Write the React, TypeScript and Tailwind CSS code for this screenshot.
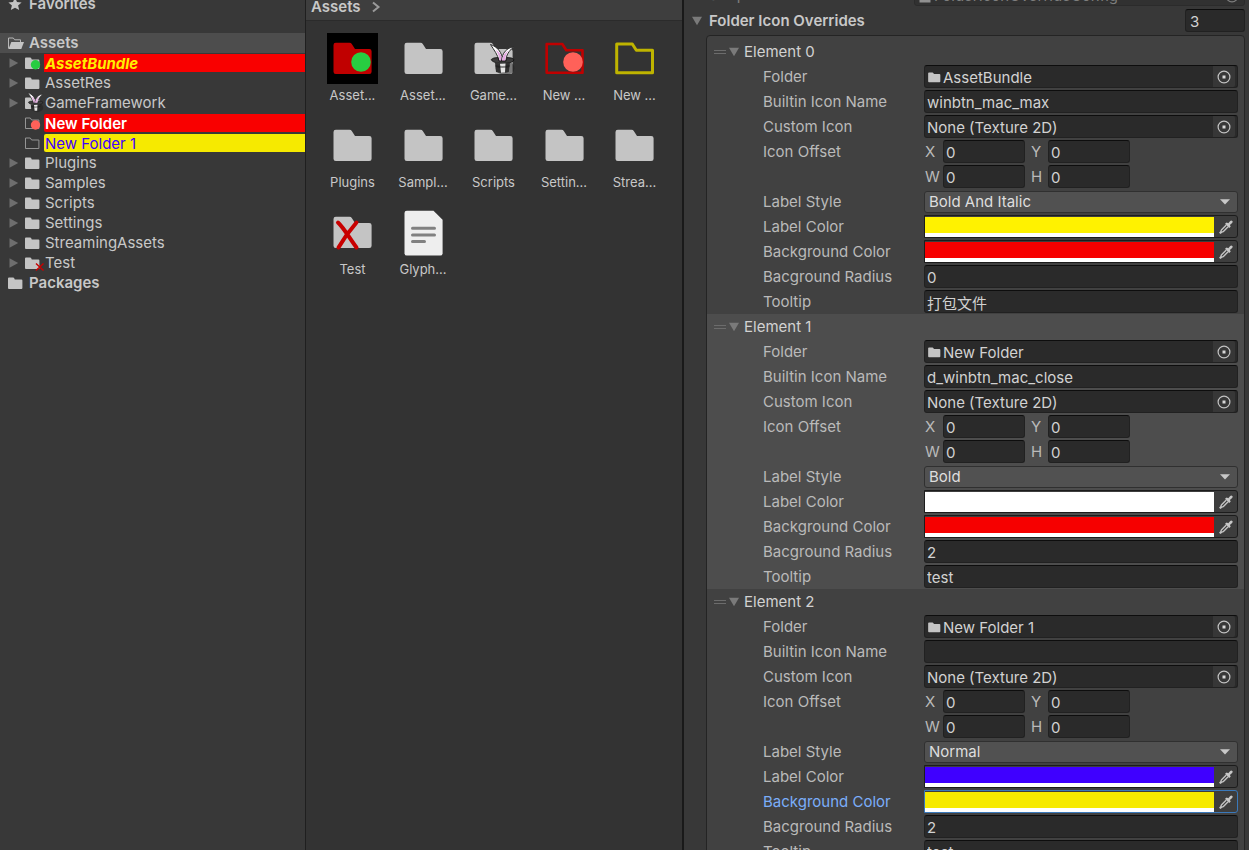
import { useId, type ReactNode } from "react";

type TreeItem = {
  name: string;
  arrow: boolean;
  icon: ReactNode;
  row?: string;
};

type Override = {
  title: string;
  folder: string;
  iconName: string;
  style: string;
  labelColor: string;
  backgroundColor: string;
  radius: string;
  tooltip: string;
  shade: string;
  focused?: boolean;
};

const FOLDER_PATH =
  "M1 3.5Q1 2.5 2 2.5H6.2Q6.8 2.5 7.1 3.1L7.8 4.5H14.4Q15.4 4.5 15.4 5.5V13Q15.4 14 14.4 14H2Q1 14 1 13Z";
const TILE_FOLDER =
  "M6.5 12Q6.5 9.7 8.8 9.7H22.5Q24 9.7 24.8 11L28 16H42.3Q44.6 16 44.6 18.3V38.7Q44.6 41 42.3 41H8.8Q6.5 41 6.5 38.7Z";

function SmallFolder({ outline, children }: { outline?: boolean; children?: ReactNode }) {
  return (
    <svg viewBox="0 0 16 16" className="size-4 shrink-0 overflow-visible" aria-hidden="true">
      {outline ? (
        <path d="M1.5 3H6.3L7.6 5H14.9V13.5H1.5Z" fill="none" stroke="#949494" strokeWidth="1" />
      ) : (
        <path d={FOLDER_PATH} fill="#c4c4c4" />
      )}
      {children}
    </svg>
  );
}

function RabbitHat() {
  return (
    <g>
      <ellipse cx="37" cy="35" rx="9.5" ry="7" fill="#1c1c1c" opacity="0.45" />
      <path d="M22.500 11.500C29 13.500 34 19 35 28L31 28C30 22 26 17 22.500 11.500Z" fill="#fff" stroke="#2b2b2b" strokeWidth="1" />
      <path d="M27.500 17C32 19 34 23 34.500 28L31.500 28C31 23 30 20 27.500 17Z" fill="#e3a9e0" />
      <path d="M45.500 14C39 14.500 34 20 33.500 28L38 28C38 22 41 18 45.500 14Z" fill="#fff" stroke="#2b2b2b" strokeWidth="1" />
      <path d="M40.500 17.500C36.500 20 34.500 23 34 28L37 28C37.500 23 38.500 20 40.500 17.500Z" fill="#e3a9e0" />
      <path d="M23.200 26.500Q25 24.500 30 24.500L31 28H38L39 24.500Q44.500 24.500 46 26.500Q46 30 35 30.500Q24 30 23.200 26.500Z" fill="#3c3c3c" stroke="#111" strokeWidth="0.800" />
      <path d="M27 29.500Q34 31.500 42 29.500L40.800 39Q34.500 41 28 39Z" fill="#303030" />
      <path d="M32 30.700L37.500 30.500L37 39.600L33 39.800Z" fill="#e6e6e6" />
      <path d="M27.300 32Q34.500 34 41.800 32L41.600 34Q34.500 36 27.500 34Z" fill="#111" opacity="0.450" />
    </g>
  );
}

function Tile({ label, className = "", children }: { label: string; className?: string; children: ReactNode }) {
  return (
    <li className="flex h-[87px] flex-col items-center">
      <svg viewBox="0 0 51 51" className={`size-[51px] shrink-0 ${className}`} aria-hidden="true">
        {children}
      </svg>
      <span className="mt-[3px] text-[13px] leading-4 whitespace-nowrap text-[#c8c8c8]">{label}</span>
    </li>
  );
}

const grayFolder = <path d={TILE_FOLDER} fill="#c4c4c4" />;
const outlineFolder = "M7.700 11H23.300L27.300 17.300H43.500V39.800H7.700Z";

function RightArrow() {
  return (
    <svg viewBox="0 0 10 10" className="size-[10px]" aria-hidden="true">
      <path d="M0.500 0.300L9.200 5L0.500 9.700Z" fill="#6e6e6e" />
    </svg>
  );
}

function DownArrow() {
  return (
    <svg viewBox="0 0 10 10" className="size-[10px]" aria-hidden="true">
      <path d="M0 0.700H10L5 9.300Z" fill="#7a7a7a" />
    </svg>
  );
}

const tree: TreeItem[] = [
  {
    name: "AssetBundle",
    arrow: true,
    row: "bg-[#f90000] font-bold italic leading-5 text-[#ffee00]",
    icon: (
      <SmallFolder>
        <circle cx="11.500" cy="9.800" r="4.700" fill="#28cd41" />
      </SmallFolder>
    ),
  },
  { name: "AssetRes", arrow: true, icon: <SmallFolder /> },
  {
    name: "GameFramework",
    arrow: true,
    icon: (
      <SmallFolder>
        <g transform="translate(-10.500 -9.700) scale(0.640)">
          <RabbitHat />
        </g>
      </SmallFolder>
    ),
  },
  {
    name: "New Folder",
    arrow: false,
    row: "rounded-l-[2px] bg-[#f90000] font-semibold leading-5 text-white",
    icon: (
      <SmallFolder outline>
        <circle cx="11.500" cy="10" r="4.700" fill="#ff6159" />
      </SmallFolder>
    ),
  },
  {
    name: "New Folder 1",
    arrow: false,
    row: "rounded-l-[2px] bg-[#f6ea00] leading-5 text-[#4000ff]",
    icon: <SmallFolder outline />,
  },
  { name: "Plugins", arrow: true, icon: <SmallFolder /> },
  { name: "Samples", arrow: true, icon: <SmallFolder /> },
  { name: "Scripts", arrow: true, icon: <SmallFolder /> },
  { name: "Settings", arrow: true, icon: <SmallFolder /> },
  { name: "StreamingAssets", arrow: true, icon: <SmallFolder /> },
  {
    name: "Test",
    arrow: true,
    icon: (
      <SmallFolder>
        <path d="M12 8.500L19.500 15.500M19.500 8.500L12 15.500" stroke="#c80000" strokeWidth="1.500" />
      </SmallFolder>
    ),
  },
];

function Sidebar() {
  return (
    <nav aria-label="Folders" className="overflow-hidden border-r border-[#1f1f1f]">
      <div className="-mt-[6px] flex h-5 items-center gap-[5px] pl-[7px] font-semibold">
        <svg viewBox="0 0 16 16" className="size-4" aria-hidden="true">
          <path
            d="M8 1.500L10 6L14.600 6.400L11.100 9.500L12.200 14.100L8 11.700L3.800 14.100L4.900 9.500L1.400 6.400L6 6Z"
            fill="#c4c4c4"
          />
        </svg>
        <span className="pl-px">Favorites</span>
      </div>
      <div className="mt-[19px] flex h-5 items-center gap-[5px] bg-[#4d4d4d] pl-[7px] font-semibold">
        <svg viewBox="0 0 16 16" className="size-4 overflow-visible" aria-hidden="true">
          <path d="M1.500 13.500V3H6.300L7.600 4.800H13.500V7" fill="none" stroke="#b8b8b8" />
          <path d="M4.300 7H17L14.300 14H1.500Z" fill="#c4c4c4" />
        </svg>
        <span className="pl-px">Assets</span>
      </div>
      <ul>
        {tree.map((item) => (
          <li key={item.name} className="flex h-5 items-center pl-2">
            <span className="w-4 shrink-0 pl-px">{item.arrow && <RightArrow />}</span>
            {item.icon}
            <span className={`ml-1 h-[18px] flex-1 pl-px ${item.row ?? "leading-[18px]"}`}>{item.name}</span>
          </li>
        ))}
      </ul>
      <div className="flex h-5 items-center gap-[5px] pl-[7px] font-semibold">
        <SmallFolder />
        <span className="pl-px">Packages</span>
      </div>
    </nav>
  );
}

function Browser() {
  return (
    <main className="overflow-hidden border-r-2 border-[#191919] bg-[#333333]">
      <header className="-mt-[6px] flex h-[27px] items-center gap-[10px] border-b border-[#2b2b2b] bg-[#3e3e3e] pl-[5px] font-semibold">
        <span>Assets</span>
        <svg viewBox="0 0 10 12" className="h-3 w-[10px]" aria-hidden="true">
          <path d="M2 1.500L7.500 6L2 10.500" fill="none" stroke="#9a9a9a" strokeWidth="2" />
        </svg>
      </header>
      <ul className="grid grid-cols-[repeat(auto-fill,51px)] justify-between gap-x-[19px] pt-3 pr-[22px] pl-[21px]">
        <Tile label="Asset..." className="bg-black">
          <path d={TILE_FOLDER} fill="#c00000" />
          <circle cx="34" cy="29" r="9.800" fill="#28cd41" />
        </Tile>
        <Tile label="Asset...">{grayFolder}</Tile>
        <Tile label="Game...">
          {grayFolder}
          <RabbitHat />
        </Tile>
        <Tile label="New ...">
          <path d={outlineFolder} fill="none" stroke="#c00000" strokeWidth="2.600" strokeLinejoin="round" />
          <circle cx="34" cy="29" r="9.800" fill="#ff6159" />
        </Tile>
        <Tile label="New ...">
          <path d={outlineFolder} fill="none" stroke="#bfb400" strokeWidth="3" strokeLinejoin="round" />
        </Tile>
        <Tile label="Plugins">{grayFolder}</Tile>
        <Tile label="Sampl...">{grayFolder}</Tile>
        <Tile label="Scripts">{grayFolder}</Tile>
        <Tile label="Settin...">{grayFolder}</Tile>
        <Tile label="Strea...">{grayFolder}</Tile>
        <Tile label="Test">
          {grayFolder}
          <path
            d="M11 15.500C17 21 23 32 29.500 40.500M29.500 15.500C23 23 17 31 11.500 40.500"
            fill="none"
            stroke="#c80000"
            strokeWidth="4"
            strokeLinecap="round"
          />
        </Tile>
        <Tile label="Glyph...">
          <path
            d="M6.500 6Q6.500 3.700 8.800 3.700H35.500L44.600 12.800V46.300Q44.600 48.600 42.300 48.600H8.800Q6.500 48.600 6.500 46.300Z"
            fill="#eeeeee"
          />
          <path d="M14.500 21.300H36.500M14.500 28H36.500M14.500 34.400H26.500" stroke="#808080" strokeWidth="3" strokeLinecap="round" />
        </Tile>
      </ul>
    </main>
  );
}

const fieldBox =
  "h-[23px] min-w-0 rounded-[3px] border border-[#212121] border-t-[#0d0d0d] bg-[#2a2a2a] text-[#d2d2d2]";

function TextField({ id, value, label, className = "pl-[2px]" }: { id?: string; value: string; label?: string; className?: string }) {
  return (
    <input id={id} aria-label={label} defaultValue={value} className={`${fieldBox} pt-[2px] outline-none ${className}`} />
  );
}

function ObjectField({ id, children }: { id: string; children: ReactNode }) {
  return (
    <div className={`flex flex-1 items-center ${fieldBox}`}>
      <button id={id} type="button" className="flex h-full min-w-0 flex-1 items-center overflow-hidden pt-[2px] pl-[2px] text-left whitespace-nowrap">
        {children}
      </button>
      <button type="button" aria-label="Pick object" className="mr-[2px] grid h-full w-[22px] place-items-center rounded-r-[2px] bg-[#373737]">
        <svg viewBox="0 0 14 14" className="size-[14px]" aria-hidden="true">
          <circle cx="7" cy="7" r="5.900" fill="none" stroke="#c4c4c4" strokeWidth="1.200" />
          <rect x="5.500" y="5.500" width="3" height="3" fill="#d8d8d8" />
        </svg>
      </button>
    </div>
  );
}

function ColorField({ id, color, focused }: { id: string; color: string; focused?: boolean }) {
  return (
    <div className={`flex h-[23px] min-w-0 flex-1 rounded-r-[3px] border bg-[#3d3d3d] ${focused ? "border-[#3a79bb]" : "border-[#1c1c1c]"}`}>
      <button id={id} type="button" className="mt-px flex flex-1 flex-col bg-white">
        <span className={`block h-4 w-full ${color}`} />
      </button>
      <button type="button" aria-label="Pick color from screen" className="grid w-[23px] place-items-center">
        <svg viewBox="0 0 14 14" className="size-[14px]" aria-hidden="true">
          <path d="M6 3.800L7.700 2.500L9.300 3.300L11.200 1Q12.300 0 13.300 0.900Q14.200 2 13.100 3L10.900 4.900L11.700 6.400L10.300 8Z" fill="#c8c8c8" />
          <path d="M7.300 5L2.600 9.700Q2 10.300 2 11.400L1 12.700L1.500 13.100L2.700 12.100Q3.800 12.100 4.400 11.500L9.100 6.800" fill="none" stroke="#c4c4c4" strokeWidth="1.400" />
        </svg>
      </button>
    </div>
  );
}

function Row({ label, htmlFor, active, children }: { label: string; htmlFor?: string; active?: boolean; children: ReactNode }) {
  const tone = active ? "text-[#7baefa]" : "text-[#bababa]";
  return (
    <div className="flex h-[25px] items-center pr-[6px] pl-14">
      {htmlFor ? (
        <label htmlFor={htmlFor} className={`w-[161px] shrink-0 ${tone}`}>{label}</label>
      ) : (
        <span className={`w-[161px] shrink-0 ${tone}`}>{label}</span>
      )}
      {children}
    </div>
  );
}

function Axis({ name, className }: { name: string; className: string }) {
  return (
    <label className="flex items-center text-[#bababa]">
      <span className={className}>{name}</span>
      <TextField value="0" className="w-[82px] pl-[2px]" />
    </label>
  );
}

function OverrideItem({ item }: { item: Override }) {
  const id = useId();
  return (
    <li className={item.shade}>
      <div className="flex h-[25px] items-center pl-[7px]">
        <svg viewBox="0 0 12 6" className="h-[6px] w-3" aria-hidden="true">
          <path d="M0 1.500H12M0 4.500H12" stroke="#6c6c6c" strokeWidth="1" />
        </svg>
        <button type="button" className="flex items-center gap-[5px] pl-[3px] text-[#d2d2d2]">
          <DownArrow />
          {item.title}
        </button>
      </div>
      <Row label="Folder" htmlFor={`${id}folder`}>
        <ObjectField id={`${id}folder`}>
          <span className="flex items-center gap-[2px] pl-px">
            <svg viewBox="1 2 15 13" className="h-[11px] w-[13px]" aria-hidden="true">
              <path d={FOLDER_PATH} fill="#c4c4c4" />
            </svg>
            {item.folder}
          </span>
        </ObjectField>
      </Row>
      <Row label="Builtin Icon Name" htmlFor={`${id}icon`}>
        <TextField id={`${id}icon`} value={item.iconName} className="flex-1 pl-[2px]" />
      </Row>
      <Row label="Custom Icon" htmlFor={`${id}custom`}>
        <ObjectField id={`${id}custom`}>None (Texture 2D)</ObjectField>
      </Row>
      <Row label="Icon Offset">
        <Axis name="X" className="w-[19px] pl-px" />
        <Axis name="Y" className="w-[23px] pl-[6px]" />
      </Row>
      <Row label="">
        <Axis name="W" className="w-[19px] pl-px" />
        <Axis name="H" className="w-[23px] pl-[6px]" />
      </Row>
      <Row label="Label Style" htmlFor={`${id}style`}>
        <div className="relative flex min-w-0 flex-1">
          <select
            id={`${id}style`}
            defaultValue={item.style}
            className="h-[22px] w-full appearance-none rounded-[3px] border border-[#303030] bg-[#515151] pb-[2px] pl-1 leading-5 text-[#dedede] outline-none"
          >
            <option>Normal</option>
            <option>Bold</option>
            <option>Italic</option>
            <option>Bold And Italic</option>
          </select>
          <svg viewBox="0 0 10 6" className="pointer-events-none absolute top-2 right-2 h-[6px] w-[10px]" aria-hidden="true">
            <path d="M0 0.300H10L5 5.500Z" fill="#c8c8c8" />
          </svg>
        </div>
      </Row>
      <Row label="Label Color" htmlFor={`${id}label`}>
        <ColorField id={`${id}label`} color={item.labelColor} />
      </Row>
      <Row label="Background Color" htmlFor={`${id}background`} active={item.focused}>
        <ColorField id={`${id}background`} color={item.backgroundColor} focused={item.focused} />
      </Row>
      <Row label="Bacground Radius" htmlFor={`${id}radius`}>
        <TextField id={`${id}radius`} value={item.radius} className="flex-1 pl-[2px]" />
      </Row>
      <Row label="Tooltip" htmlFor={`${id}tooltip`}>
        <TextField id={`${id}tooltip`} value={item.tooltip} className="flex-1 pl-[2px]" />
      </Row>
    </li>
  );
}

const overrides: Override[] = [
  {
    title: "Element 0",
    folder: "AssetBundle",
    iconName: "winbtn_mac_max",
    style: "Bold And Italic",
    labelColor: "bg-[#fff200]",
    backgroundColor: "bg-[#f60000]",
    radius: "0",
    tooltip: "打包文件",
    shade: "bg-[#414141]",
  },
  {
    title: "Element 1",
    folder: "New Folder",
    iconName: "d_winbtn_mac_close",
    style: "Bold",
    labelColor: "bg-white",
    backgroundColor: "bg-[#f60000]",
    radius: "2",
    tooltip: "test",
    shade: "bg-[#4d4d4d]",
  },
  {
    title: "Element 2",
    folder: "New Folder 1",
    iconName: "",
    style: "Normal",
    labelColor: "bg-[#3f00ff]",
    backgroundColor: "bg-[#f6ea00]",
    radius: "2",
    tooltip: "test",
    shade: "bg-[#414141]",
    focused: true,
  },
];

function Inspector() {
  return (
    <section aria-label="Inspector" className="min-w-0 overflow-hidden pr-1 pl-2">
      <div className="-mt-[18px] flex h-[25px] items-center pl-[17px] text-[#7e7e7e]">
        <span className="w-[205px] shrink-0">Script</span>
        <div className="flex h-[23px] min-w-0 flex-1 items-center gap-[3px] rounded-[3px] border border-[#2b2b2b] bg-[#313131] pt-[2px] pl-1">
          <svg viewBox="0 0 12 14" className="h-[14px] w-3" aria-hidden="true">
            <path d="M0.500 0.500H9L11.500 3V13.500H0.500Z" fill="#8f8f8f" />
            <path d="M3.500 7.500H9M3.500 10H9" stroke="#4f7a57" strokeWidth="1.500" />
          </svg>
          <span className="flex-1">FolderIconOverrideConfig</span>
          <svg viewBox="0 0 14 14" className="mr-[5px] size-[14px]" aria-hidden="true">
            <circle cx="7" cy="7" r="5.900" fill="none" stroke="#7e7e7e" strokeWidth="1.200" />
            <rect x="5.500" y="5.500" width="3" height="3" fill="#7e7e7e" />
          </svg>
        </div>
      </div>
      <div className="mt-px flex h-[25px] items-center justify-between">
        <button type="button" className="flex items-center gap-[7px] font-semibold">
          <DownArrow />
          Folder Icon Overrides
        </button>
        <TextField label="Size" value="3" className="w-[60px] pl-[4px]" />
      </div>
      <ul className="mt-[2px] ml-[14px] rounded-t-[4px] border border-[#242424] bg-[#414141] pt-[3px]">
        {overrides.map((item) => (
          <OverrideItem key={item.title} item={item} />
        ))}
      </ul>
    </section>
  );
}

export default function App() {
  return (
    <div className="grid h-screen grid-cols-[306px_378px_minmax(0,1fr)] grid-rows-1 overflow-hidden bg-[#383838] font-['Inter','Noto_Sans_CJK_SC',sans-serif] text-[15px] leading-5 text-[#c8c8c8]">
      <Sidebar />
      <Browser />
      <Inspector />
    </div>
  );
}
